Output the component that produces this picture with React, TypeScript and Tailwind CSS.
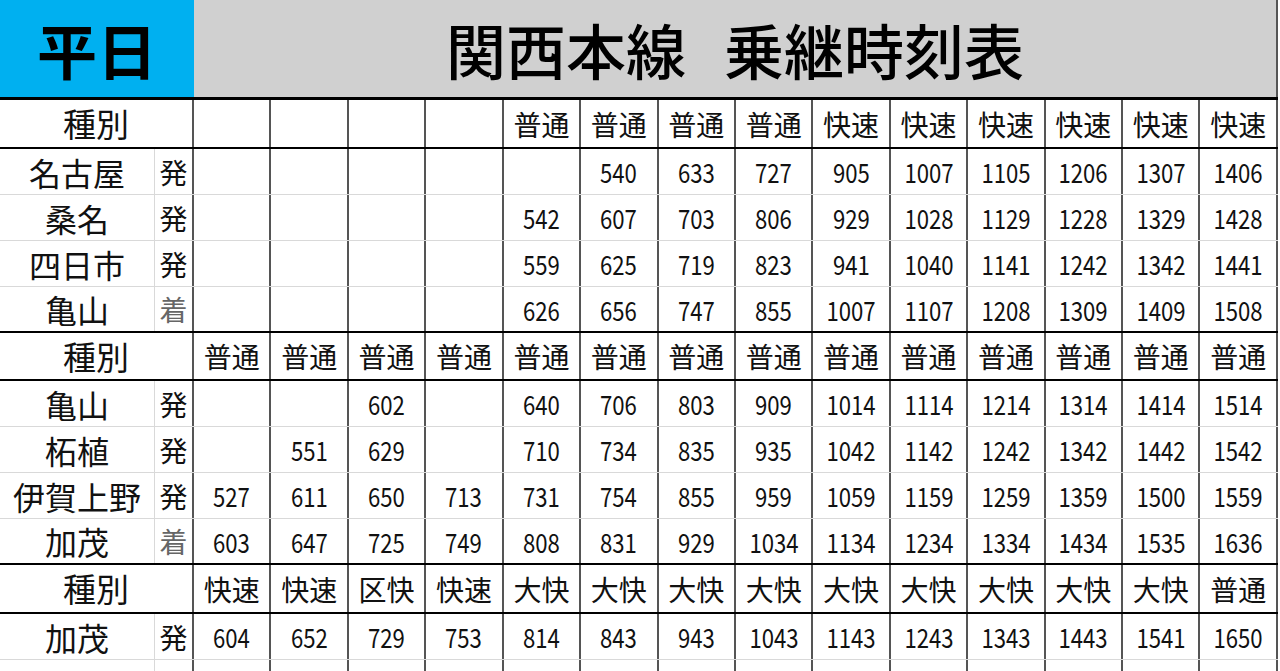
import React from "react";

type Row = { name: string; kind: "発" | "着"; times: (string | null)[]; last?: boolean };

const B = null;

const sec1Types = [B, B, B, B, "普通", "普通", "普通", "普通", "快速", "快速", "快速", "快速", "快速", "快速"];
const sec1: Row[] = [
  { name: "名古屋", kind: "発", times: [B, B, B, B, B, "540", "633", "727", "905", "1007", "1105", "1206", "1307", "1406"] },
  { name: "桑名", kind: "発", times: [B, B, B, B, "542", "607", "703", "806", "929", "1028", "1129", "1228", "1329", "1428"] },
  { name: "四日市", kind: "発", times: [B, B, B, B, "559", "625", "719", "823", "941", "1040", "1141", "1242", "1342", "1441"] },
  { name: "亀山", kind: "着", last: true, times: [B, B, B, B, "626", "656", "747", "855", "1007", "1107", "1208", "1309", "1409", "1508"] },
];

const sec2Types = Array(14).fill("普通");
const sec2: Row[] = [
  { name: "亀山", kind: "発", times: [B, B, "602", B, "640", "706", "803", "909", "1014", "1114", "1214", "1314", "1414", "1514"] },
  { name: "柘植", kind: "発", times: [B, "551", "629", B, "710", "734", "835", "935", "1042", "1142", "1242", "1342", "1442", "1542"] },
  { name: "伊賀上野", kind: "発", times: ["527", "611", "650", "713", "731", "754", "855", "959", "1059", "1159", "1259", "1359", "1500", "1559"] },
  { name: "加茂", kind: "着", last: true, times: ["603", "647", "725", "749", "808", "831", "929", "1034", "1134", "1234", "1334", "1434", "1535", "1636"] },
];

const sec3Types = ["快速", "快速", "区快", "快速", "大快", "大快", "大快", "大快", "大快", "大快", "大快", "大快", "大快", "普通"];
const sec3: Row[] = [
  { name: "加茂", kind: "発", times: ["604", "652", "729", "753", "814", "843", "943", "1043", "1143", "1243", "1343", "1443", "1541", "1650"] },
];

function TypeRow({ types, h }: { types: (string | null)[]; h: string }) {
  return (
    <div className={`flex ${h} border-b-2 border-black`}>
      <div className="w-[194px] shrink-0 border-r-2 border-[#555] flex items-center justify-center text-[33px] leading-none text-[#111]">
        種別
      </div>
      {types.map((t, i) => (
        <div
          key={i}
          className="flex-1 min-w-0 border-r-2 border-[#555] flex items-center justify-center text-[28px] leading-none text-[#111]"
        >
          {t ?? ""}
        </div>
      ))}
    </div>
  );
}

function StationRow({ row }: { row: Row }) {
  return (
    <div className={`flex h-[46px] ${row.last ? "border-b-2 border-black" : "border-b border-[#d9d9d9]"}`}>
      <div className="w-[155px] shrink-0 border-r border-[#d9d9d9] flex items-center justify-center text-[32px] leading-none text-[#111] whitespace-nowrap">
        {row.name}
      </div>
      <div
        className={`w-[39px] shrink-0 border-r-2 border-[#555] flex items-center justify-center text-[28px] leading-none ${
          row.kind === "着" ? "text-[#666]" : "text-[#111]"
        }`}
      >
        {row.kind}
      </div>
      {row.times.map((t, i) => (
        <div
          key={i}
          className="flex-1 min-w-0 border-r-2 border-[#555] flex items-center justify-center text-[27px] leading-none text-[#111]"
        >
          {t ? <span className="inline-block scale-x-[0.82]">{t}</span> : null}
        </div>
      ))}
    </div>
  );
}

export default function App() {
  return (
    <div className="w-[1280px] h-[671px] overflow-hidden bg-white font-['Noto_Sans_CJK_JP',sans-serif]">
      <div className="w-[1278px]">
        <div className="flex h-[100px] border-b-[3px] border-black">
          <div className="w-[194px] shrink-0 bg-[#00b0f0] flex items-center justify-center text-[60px] font-bold leading-none text-black">
            平日
          </div>
          <div className="flex-1 bg-[#d0d0d0] border-r-2 border-[#555] flex items-center justify-center text-[60px] font-medium leading-none text-black">
            <span>関西本線</span>
            <span className="ml-[38px]">乗継時刻表</span>
          </div>
        </div>
        <TypeRow types={sec1Types} h="h-[49px]" />
        {sec1.map((r, i) => (
          <StationRow key={"a" + i} row={r} />
        ))}
        <TypeRow types={sec2Types} h="h-[48px]" />
        {sec2.map((r, i) => (
          <StationRow key={"b" + i} row={r} />
        ))}
        <TypeRow types={sec3Types} h="h-[49px]" />
        {sec3.map((r, i) => (
          <StationRow key={"c" + i} row={r} />
        ))}
        <div className="flex h-[46px]">
          <div className="w-[155px] shrink-0 border-r border-[#d9d9d9]" />
          <div className="w-[39px] shrink-0 border-r-2 border-[#555]" />
          {Array.from({ length: 14 }).map((_, i) => (
            <div key={i} className="flex-1 min-w-0 border-r-2 border-[#555]" />
          ))}
        </div>
      </div>
    </div>
  );
}
